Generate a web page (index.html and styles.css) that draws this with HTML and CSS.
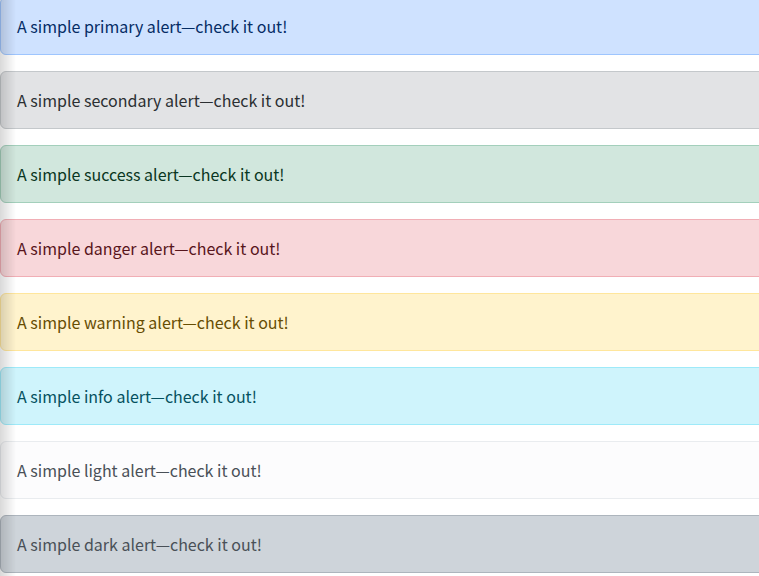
FILE: index.html
```html
<!DOCTYPE html>
<html lang="en">
<head>
<meta charset="utf-8">
<title>Alerts</title>
<link rel="stylesheet" href="styles.css">
</head>
<body>
<div class="stack">
  <div class="alert alert-primary" role="alert">A simple primary alert—check it out!</div>
  <div class="alert alert-secondary" role="alert">A simple secondary alert—check it out!</div>
  <div class="alert alert-success" role="alert">A simple success alert—check it out!</div>
  <div class="alert alert-danger" role="alert">A simple danger alert—check it out!</div>
  <div class="alert alert-warning" role="alert">A simple warning alert—check it out!</div>
  <div class="alert alert-info" role="alert">A simple info alert—check it out!</div>
  <div class="alert alert-light" role="alert">A simple light alert—check it out!</div>
  <div class="alert alert-dark" role="alert">A simple dark alert—check it out!</div>
</div>
<div class="edge-shadow"></div>
</body>
</html>
```
FILE: styles.css
```css
html, body {
  margin: 0;
  padding: 0;
  overflow: hidden;
  background: #fff;
}
body {
  font-family: "Noto Sans CJK KR", "Open Sans", sans-serif;
  font-size: 16px;
  line-height: 1.5;
}
.stack {
  display: flex;
  flex-direction: column;
  gap: 16px;
  margin-top: -3px;
  width: calc(100% + 12px);
}
.alert {
  padding: 16px;
  border: 1px solid transparent;
  border-radius: 6px;
}
.alert-primary { background: #cfe2ff; border-color: #9ec5fe; color: #052c65; }
.alert-secondary { background: #e2e3e5; border-color: #c4c8cb; color: #2b2f32; }
.alert-success { background: #d1e7dd; border-color: #a3cfbb; color: #0a3622; }
.alert-danger { background: #f8d7da; border-color: #f1aeb5; color: #58151c; }
.alert-warning { background: #fff3cd; border-color: #ffe69c; color: #664d03; }
.alert-info { background: #cff4fc; border-color: #9eeaf9; color: #055160; }
.alert-light { background: #fcfcfd; border-color: #e9ecef; color: #495057; }
.alert-dark { background: #ced4da; border-color: #adb5bd; color: #495057; }
.edge-shadow {
  position: fixed;
  left: 0;
  top: 0;
  bottom: 0;
  width: 16px;
  background: linear-gradient(to right, rgba(0,0,0,0.15), rgba(0,0,0,0));
  pointer-events: none;
}
```
